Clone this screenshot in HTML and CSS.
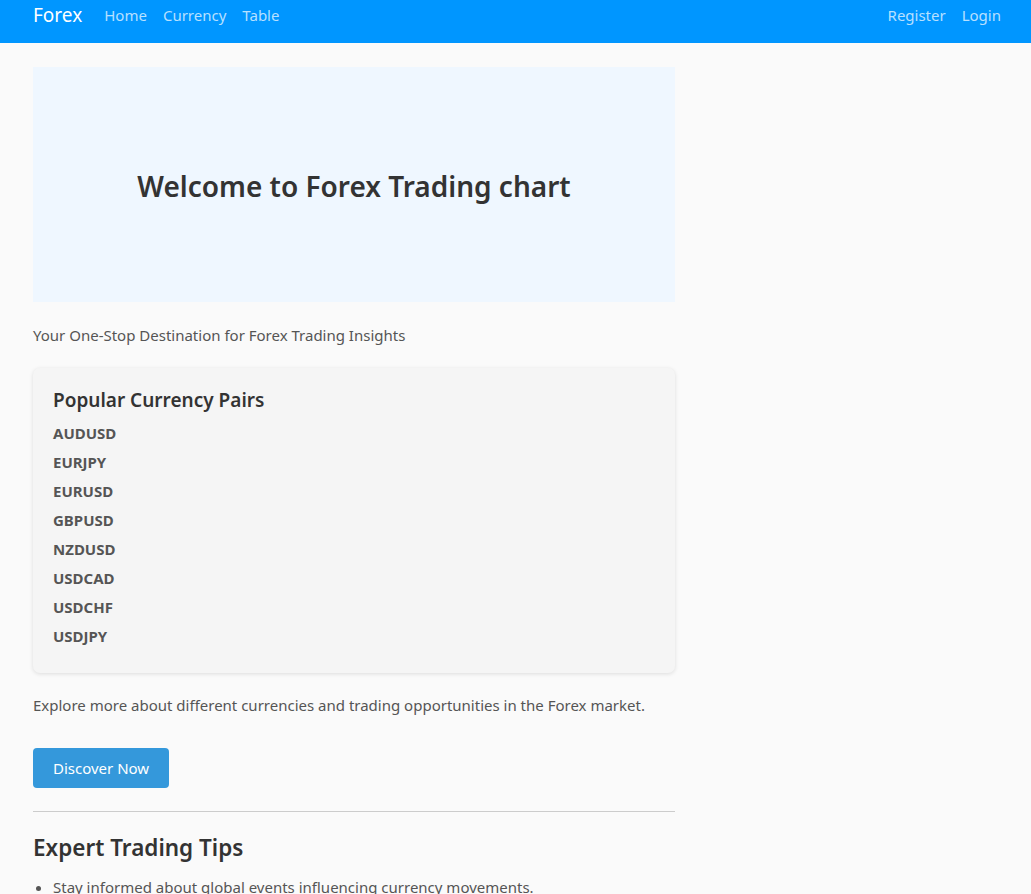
FILE: index.html
```html
<!DOCTYPE html>
<html lang="en">
<head>
<meta charset="utf-8">
<title>Forex</title>
<link rel="stylesheet" href="styles.css">
</head>
<body>
<nav class="navbar">
  <div class="nav-left">
    <a class="brand" href="#">Forex</a>
    <a class="nav-link" href="#">Home</a>
    <a class="nav-link" href="#">Currency</a>
    <a class="nav-link" href="#">Table</a>
  </div>
  <div class="nav-right">
    <a class="nav-link" href="#">Register</a>
    <a class="nav-link" href="#">Login</a>
  </div>
</nav>
<main class="main">
  <section class="hero">
    <h1 class="hero-title">Welcome to Forex Trading chart</h1>
  </section>
  <p class="lead">Your One-Stop Destination for Forex Trading Insights</p>
  <section class="card">
    <h3 class="card-title">Popular Currency Pairs</h3>
    <ul class="pairs">
      <li>AUDUSD</li>
      <li>EURJPY</li>
      <li>EURUSD</li>
      <li>GBPUSD</li>
      <li>NZDUSD</li>
      <li>USDCAD</li>
      <li>USDCHF</li>
      <li>USDJPY</li>
    </ul>
  </section>
  <p class="text">Explore more about different currencies and trading opportunities in the Forex market.</p>
  <div class="actions"><a class="btn" href="#">Discover Now</a></div>
  <hr class="divider">
  <h2 class="section-title">Expert Trading Tips</h2>
  <ul class="tips">
    <li>Stay informed about global events influencing currency movements.</li>
  </ul>
</main>
</body>
</html>
```
FILE: styles.css
```css
* { box-sizing: border-box; }
html, body { margin: 0; padding: 0; }
body {
  background: #fafafa;
  font-family: "Segoe UI", "Noto Sans", "Open Sans", sans-serif;
  color: #555;
  font-size: 15px;
  line-height: 1.5;
}
a { text-decoration: none; }
.navbar {
  background: #0096ff;
  display: flex;
  align-items: center;
  justify-content: space-between;
  padding: 0 30px 0 33px;
  margin-top: -13px;
  height: 56px;
}
.nav-left, .nav-right { display: flex; align-items: center; gap: 16px; }
.brand {
  color: #fff;
  font-size: 19px;
  margin-right: 6px;
}
.nav-link {
  color: rgba(255,255,255,0.72);
  font-size: 15px;
}
.main {
  width: 642px;
  margin-left: 33px;
  padding-top: 24px;
}
.hero {
  height: 235px;
  background: #eff7ff;
  display: flex;
  align-items: center;
  justify-content: center;
}
.hero-title {
  margin: 0;
  font-size: 28px;
  font-weight: 600;
  color: #333;
  position: relative;
  top: 1px;
}
.lead { margin: 21px 0 0; line-height: 24px; }
.card {
  margin-top: 21px;
  background: #f5f5f5;
  border-radius: 7px;
  box-shadow: 0 1px 4px rgba(0,0,0,0.12);
  padding: 18px 20px 22px;
}
.card-title {
  margin: 0 0 5px;
  font-size: 19px;
  font-weight: 600;
  color: #333;
  line-height: 28px;
}
.pairs { list-style: none; margin: 0; padding: 0; }
.pairs li {
  font-weight: 700;
  color: #555;
  line-height: 29px;
}
.text { margin: 20px 0 0; line-height: 24px; }
.actions { margin-top: 31px; }
.btn {
  display: inline-block;
  background: #3498db;
  color: #fff;
  border-radius: 4px;
  padding: 8px 20px;
  line-height: 24px;
  font-size: 15px;
}
.divider {
  border: 0;
  border-top: 1px solid #ccc;
  margin: 23px 0 0;
}
.section-title {
  margin: 20px 0 0;
  font-size: 22.5px;
  font-weight: 600;
  color: #333;
  line-height: 32px;
}
.tips { margin: 11px 0 0; padding-left: 20px; }
.tips li { line-height: 24px; }
```
